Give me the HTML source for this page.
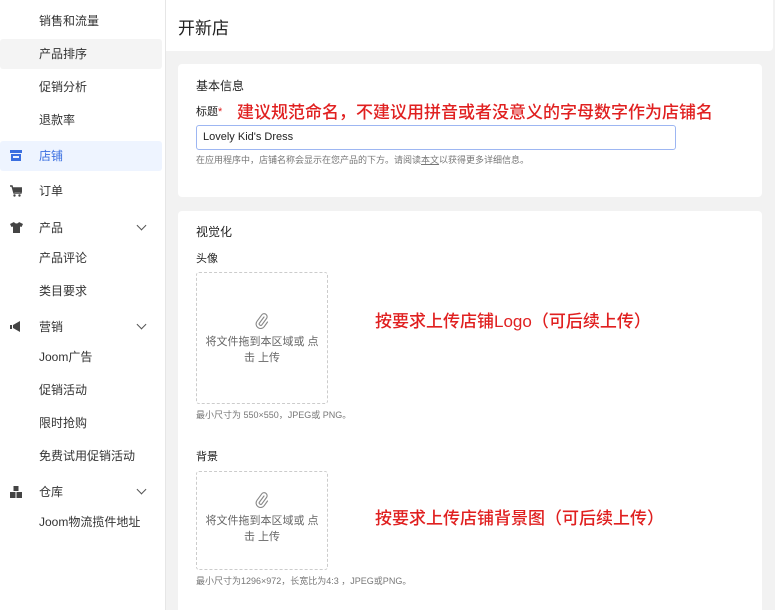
<!DOCTYPE html>
<html><head><meta charset="utf-8"><style>
*{margin:0;padding:0;box-sizing:border-box}
html,body{width:775px;height:610px;overflow:hidden}
body{background:#f2f2f2;font-family:"Liberation Sans","Noto Sans CJK SC",sans-serif;position:relative;color:#333}
.side{position:absolute;left:0;top:0;width:166px;height:610px;background:#fff;border-right:1px solid #e6e6e6}
.it{position:absolute;left:39px;font-size:12px;line-height:14px;color:#333}
.hl{position:absolute;left:0;width:162px;height:30px;border-radius:3px}
.ic{position:absolute;left:10px}
.chev{position:absolute;left:138px;width:7px;height:7px;border-right:1.3px solid #555;border-bottom:1.3px solid #555;transform:rotate(45deg)}
.hdr{position:absolute;left:166px;top:0;width:607px;height:51px;background:#fff;border-radius:0 0 4px 0}
.card{position:absolute;left:178px;width:584px;background:#fff;border-radius:4px}
.t{position:absolute;font-size:12px;color:#222}
.red{position:absolute;color:#e02020;font-size:17px;font-weight:500;white-space:nowrap}
.up{position:absolute;left:196px;width:132px;border:1px dashed #ccc;border-radius:3px;text-align:center;font-size:11px;color:#666;line-height:16px}
.sm{position:absolute;font-size:9px;color:#777}
</style></head><body>
<div class="side">
<div class="hl" style="top:39px;background:#f4f4f4"></div>
<div class="hl" style="top:141px;background:#eef4ff"></div>
<div class="it" style="top:14px">销售和流量</div>
<div class="it" style="top:47px">产品排序</div>
<div class="it" style="top:80px">促销分析</div>
<div class="it" style="top:113px">退款率</div>
<svg class="ic" style="top:150px" width="12" height="11" viewBox="0 0 12 11"><rect x="0" y="0" width="12" height="3" fill="#3b6fe0"/><rect x="1" y="4" width="10" height="7" fill="#3b6fe0"/><rect x="3" y="6" width="6" height="2" fill="#eef4ff"/></svg>
<div class="it" style="top:149px;color:#3b6fe0">店铺</div>
<svg class="ic" style="top:185px" width="12" height="12" viewBox="0 0 12 12"><path d="M0 1h2l2 7h7l1-5H3" fill="none" stroke="#444" stroke-width="1.4"/><rect x="3" y="3" width="8" height="4" fill="#444"/><circle cx="4.5" cy="10.5" r="1.2" fill="#444"/><circle cx="9.5" cy="10.5" r="1.2" fill="#444"/></svg>
<div class="it" style="top:184px">订单</div>
<svg class="ic" style="top:222px" width="13" height="11" viewBox="0 0 13 11"><path d="M4 0L0 2l1.5 3L3 4.5V11h7V4.5l1.5.5L13 2 9 0c-.5 1-1.5 1.5-2.5 1.5S4.5 1 4 0z" fill="#444"/></svg>
<div class="it" style="top:221px">产品</div><div class="chev" style="top:222px"></div>
<div class="it" style="top:251px">产品评论</div>
<div class="it" style="top:284px">类目要求</div>
<svg class="ic" style="top:321px" width="12" height="11" viewBox="0 0 12 11"><path d="M0 4h2v4H0zM3 4l7-4v11L3 7z" fill="#444"/></svg>
<div class="it" style="top:320px">营销</div><div class="chev" style="top:321px"></div>
<div class="it" style="top:350px">Joom广告</div>
<div class="it" style="top:383px">促销活动</div>
<div class="it" style="top:416px">限时抢购</div>
<div class="it" style="top:449px">免费试用促销活动</div>
<svg class="ic" style="top:486px" width="12" height="12" viewBox="0 0 12 12"><rect x="3.5" y="0" width="5" height="5" fill="#444"/><rect x="0" y="6" width="5.5" height="6" fill="#444"/><rect x="6.5" y="6" width="5.5" height="6" fill="#444"/></svg>
<div class="it" style="top:485px">仓库</div><div class="chev" style="top:486px"></div>
<div class="it" style="top:515px">Joom物流揽件地址</div>
</div>
<div class="hdr"><div style="position:absolute;left:12px;top:14px;font-size:17px;color:#222">开新店</div></div>
<div class="card" style="top:64px;height:133px"></div>
<div class="card" style="top:211px;height:399px;border-radius:4px 4px 0 0"></div>
<div class="t" style="left:196px;top:77px">基本信息</div>
<div class="t" style="left:196px;top:103px;font-size:11px">标题<span style="color:#e02020">*</span></div>
<div class="red" style="left:237px;top:98px">建议规范命名，不建议用拼音或者没意义的字母数字作为店铺名</div>
<div style="position:absolute;left:196px;top:125px;width:480px;height:25px;border:1px solid #9db6f2;border-radius:3px;font-size:11px;line-height:23px;padding-left:6px;color:#222">Lovely Kid's Dress</div>
<div class="sm" style="left:196px;top:153px">在应用程序中，店铺名称会显示在您产品的下方。请阅读<u>本文</u>以获得更多详细信息。</div>
<div class="t" style="left:196px;top:223px">视觉化</div>
<div class="t" style="left:196px;top:250px;font-size:11px">头像</div>
<div class="up" style="top:272px;height:132px"><svg style="margin-top:40px" width="14" height="16" viewBox="0 0 14 16"><path d="M9 4L4.5 10a1.5 1.5 0 0 0 2.4 1.8L11.5 5.5a3 3 0 0 0-4.8-3.6L2 8.3a4.5 4.5 0 0 0 7.2 5.4L12.5 9" fill="none" stroke="#888" stroke-width="1.1" stroke-linecap="round"/></svg><br>将文件拖到本区域或 点<br>击 上传</div>
<div class="red" style="left:375px;top:307px">按要求上传店铺Logo（可后续上传）</div>
<div class="sm" style="left:196px;top:408px">最小尺寸为 550×550，JPEG或 PNG。</div>
<div class="t" style="left:196px;top:448px;font-size:11px">背景</div>
<div class="up" style="top:471px;height:99px"><svg style="margin-top:20px" width="14" height="16" viewBox="0 0 14 16"><path d="M9 4L4.5 10a1.5 1.5 0 0 0 2.4 1.8L11.5 5.5a3 3 0 0 0-4.8-3.6L2 8.3a4.5 4.5 0 0 0 7.2 5.4L12.5 9" fill="none" stroke="#888" stroke-width="1.1" stroke-linecap="round"/></svg><br>将文件拖到本区域或 点<br>击 上传</div>
<div class="red" style="left:375px;top:504px">按要求上传店铺背景图（可后续上传）</div>
<div class="sm" style="left:196px;top:574px">最小尺寸为1296×972，长宽比为4:3 ，JPEG或PNG。</div>
</body></html>
